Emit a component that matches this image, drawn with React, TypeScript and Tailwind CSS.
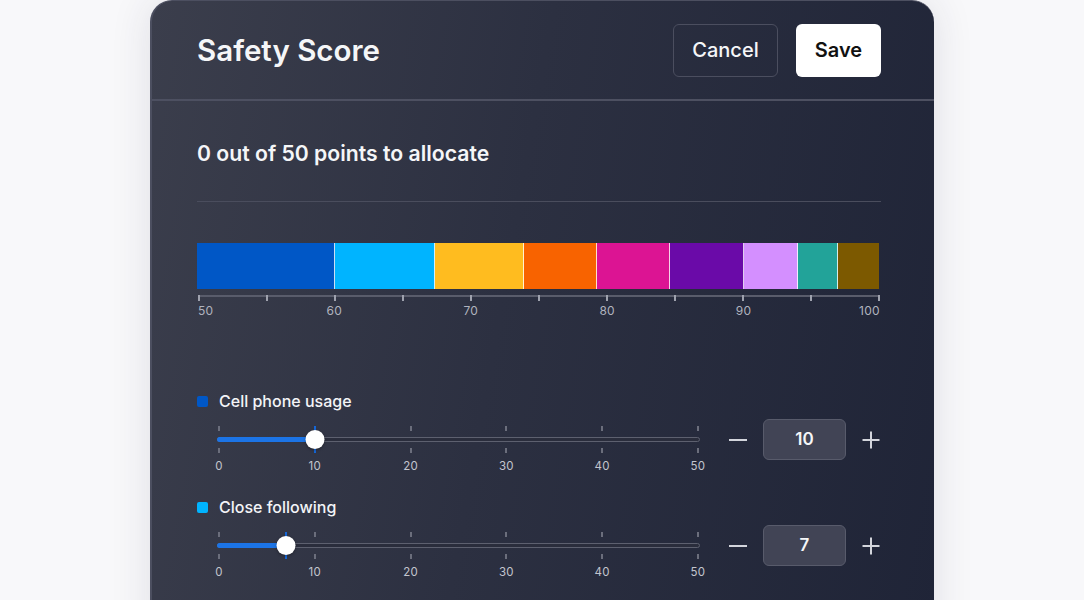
import React from "react";

type Segment = { color: string; width: number };

const SEGMENTS: Segment[] = [
  { color: "#0057c6", width: 138 },
  { color: "#00b4ff", width: 100 },
  { color: "#ffbc1f", width: 89 },
  { color: "#f86300", width: 73 },
  { color: "#dc1493", width: 73 },
  { color: "#6a0aa8", width: 74 },
  { color: "#d48fff", width: 54 },
  { color: "#22a399", width: 40 },
  { color: "#7c5900", width: 41 },
];

const AXIS_LABELS = ["50", "60", "70", "80", "90", "100"];
const SLIDER_LABELS = ["0", "10", "20", "30", "40", "50"];

function MinusIcon() {
  return (
    <svg width="20" height="20" viewBox="0 0 20 20" fill="none">
      <line x1="1" y1="10" x2="19" y2="10" stroke="#d3d5dc" strokeWidth="2" />
    </svg>
  );
}

function PlusIcon() {
  return (
    <svg width="20" height="20" viewBox="0 0 20 20" fill="none">
      <line x1="1.5" y1="10" x2="18.5" y2="10" stroke="#d3d5dc" strokeWidth="2" />
      <line x1="10" y1="1.5" x2="10" y2="18.5" stroke="#d3d5dc" strokeWidth="2" />
    </svg>
  );
}

function Ticks() {
  return (
    <div className="flex h-[5px] justify-between px-[1px]">
      {SLIDER_LABELS.map((l) => (
        <div key={l} className="h-full w-[2px] bg-[#6b6e7c]" />
      ))}
    </div>
  );
}

function SliderRow({
  label,
  color,
  value,
}: {
  label: string;
  color: string;
  value: number;
}) {
  const pct = value / 50;
  // ticks sit 2px in from either end of the 483px track
  const pos = 2 + pct * 478;

  return (
    <div>
      <div className="flex h-[24px] items-center gap-[11px]">
        <div
          className="h-[11px] w-[11px] rounded-[2px]"
          style={{ backgroundColor: color }}
        />
        <span className="text-[16px] font-medium text-[#f3f4f7]">{label}</span>
      </div>

      <div className="mt-[6px] flex items-start">
        <div className="relative ml-[20px] w-[483px] pt-[7px]">
          <Ticks />
          <div className="mt-[6px] h-[5px] rounded-full border border-[#5d606f] bg-[#2a2d3c]" />
          <div className="mt-[6px]">
            <Ticks />
          </div>
          <div className="mt-[6px] flex h-[14px] justify-between px-[2px]">
            {SLIDER_LABELS.map((l) => (
              <div key={l} className="flex w-0 justify-center">
                <span className="text-[11.5px] leading-[14px] tracking-wide text-[#c3c5ce]">
                  {l}
                </span>
              </div>
            ))}
          </div>

          {/* filled part */}
          <div
            className="absolute left-0 top-[18px] h-[5px] rounded-full bg-[#1c74e6]"
            style={{ width: pos }}
          />
          {/* value marker */}
          <div
            className="absolute top-[7px] h-[27px] w-[2px] -translate-x-1/2 bg-[#1566d6]"
            style={{ left: pos }}
          />
          {/* thumb */}
          <div
            className="absolute top-[11px] h-[19px] w-[19px] -translate-x-1/2 rounded-full bg-white shadow-[0_1px_3px_rgba(0,0,0,0.35)]"
            style={{ left: pos }}
          />
        </div>

        <div className="ml-[28px] flex h-[41px] items-center">
          <MinusIcon />
          <div className="ml-[15px] flex h-[41px] w-[83px] items-center justify-center rounded-[6px] border border-[#585b6b] bg-[#414455] text-[17px] font-semibold text-[#f5f6f8]">
            {value}
          </div>
          <div className="ml-[15px]">
            <PlusIcon />
          </div>
        </div>
      </div>
    </div>
  );
}

export default function App() {
  return (
    <div className="h-[600px] overflow-hidden bg-[#f8f8fa] font-['Inter','Liberation_Sans',sans-serif]">
      <div className="mx-auto h-[640px] w-[784px] rounded-t-[22px] border-l-2 border-t border-[#4c4f60] bg-[linear-gradient(100deg,#3b3e4c_0%,#2c3041_45%,#1f2437_100%)] shadow-[0_0_40px_rgba(40,40,70,0.12)]">
        <div className="flex h-[100px] items-center justify-between border-b-2 border-[#4d5061] pl-[45px] pr-[53px]">
          <h1 className="text-[29.5px] font-semibold text-[#f5f6f8]">Safety Score</h1>
          <div className="flex items-center gap-[18px]">
            <button className="h-[53px] w-[105px] rounded-[6px] border border-[#4b4e5f] text-[20px] font-medium text-[#f5f6f8]">
              Cancel
            </button>
            <button className="h-[53px] w-[85px] rounded-[6px] bg-white text-[20px] font-semibold text-[#111]">
              Save
            </button>
          </div>
        </div>

        <div className="pl-[45px] pr-[53px]">
          <p className="mt-[38px] text-[21.2px] font-semibold leading-[28px] text-[#f5f6f8]">
            0 out of 50 points to allocate
          </p>
          <div className="mt-[34px] h-px bg-[#4a4d5d]" />

          <div className="mt-[41px] flex h-[46px] w-[682px]">
            {SEGMENTS.map((s, i) => (
              <div
                key={i}
                className={i < SEGMENTS.length - 1 ? "h-full border-r border-white/80" : "h-full"}
                style={{ backgroundColor: s.color, width: s.width }}
              />
            ))}
          </div>

          <div className="ml-[1px] mt-[6px] w-[682px]">
            <div className="flex h-[6px] justify-between border-t-2 border-[#595c6b]">
              {Array.from({ length: 11 }).map((_, i) => (
                <div key={i} className="-mt-[2px] h-[6px] w-[2px] bg-[#9fa2ae]" />
              ))}
            </div>
            <div className="mt-[2px] flex h-[16px] justify-between">
              {AXIS_LABELS.map((l, i) => (
                <div
                  key={l}
                  className={
                    i === 0
                      ? "flex w-0 justify-start"
                      : i === AXIS_LABELS.length - 1
                        ? "flex w-0 justify-end"
                        : "flex w-0 justify-center"
                  }
                >
                  <span className="text-[12px] leading-[16px] tracking-wide text-[#b0b3be]">
                    {l}
                  </span>
                </div>
              ))}
            </div>
          </div>

          <div className="mt-[70px] flex flex-col gap-[22px]">
            <SliderRow label="Cell phone usage" color="#0057c6" value={10} />
            <SliderRow label="Close following" color="#00b4ff" value={7} />
          </div>
        </div>
      </div>
    </div>
  );
}
